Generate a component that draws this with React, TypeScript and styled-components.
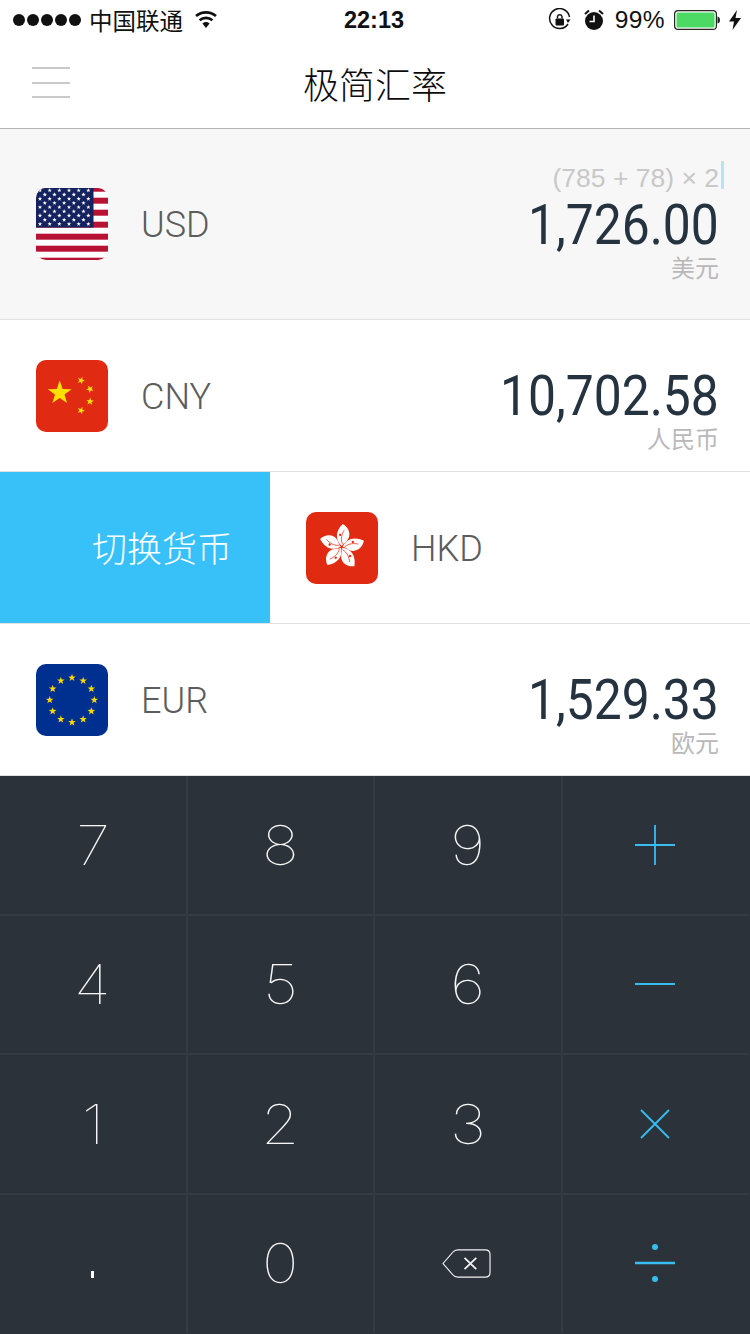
import React from 'react';
import styled, { createGlobalStyle } from 'styled-components';

const GlobalStyle = createGlobalStyle`
    html, body {
        margin: 0;
        padding: 0;
        background: #fff;
    }
    * {
        box-sizing: border-box;
    }
`;

const cjk = `"Liberation Sans", "Noto Sans CJK SC", sans-serif`;
const din = `"Roboto", "Noto Sans CJK SC", sans-serif`;

const Page = styled.div`
    width: 750px;
    height: 1334px;
    display: flex;
    flex-direction: column;
    overflow: hidden;
    font-family: ${cjk};
`;

// status bar
const StatusBar = styled.div`
    height: 40px;
    display: grid;
    grid-template-columns: 1fr auto 1fr;
    align-items: center;
    font-size: 24px;
    color: #111;
`;
const StatusLeft = styled.div`
    display: flex;
    align-items: center;
    padding-left: 13px;
    font-size: 23.5px;
`;
const Signal = styled.div`
    display: flex;
    gap: 2px;
    margin-right: 8px;
`;
const SignalDot = styled.span`
    width: 12px;
    height: 12px;
    border-radius: 50%;
    background: #111;
`;
const Wifi = styled.svg`
    margin-left: 11px;
    margin-top: -2px;
`;
const Clock = styled.div`
    font-weight: 700;
    font-size: 23.5px;
    margin-left: -2px;
`;
const StatusRight = styled.div`
    display: flex;
    align-items: center;
    justify-content: flex-end;
    padding-right: 9px;
`;
const Percent = styled.span`
    margin: 0 9px 0 11px;
    letter-spacing: 0.4px;
    font-size: 24.5px;
`;
const Alarm = styled.svg`
    margin-left: 12px;
`;
const Bolt = styled.svg`
    margin-left: 9px;
`;

// nav
const Nav = styled.div`
    height: 89px;
    border-bottom: 1px solid #b4b4b4;
    display: flex;
    align-items: center;
    justify-content: center;
    position: relative;
`;
const Menu = styled.div`
    position: absolute;
    left: 32px;
    top: 27px;
    width: 38px;
    height: 31px;
    display: flex;
    flex-direction: column;
    justify-content: space-between;
`;
const MenuLine = styled.span`
    height: 2px;
    background: #c9c9c9;
`;
const Title = styled.div`
    font-size: 36px;
    font-weight: 300;
    color: #0c0c0c;
    margin-top: -3px;
`;

// rows
const Row = styled.div<{ $active?: boolean }>`
    height: ${(p) => (p.$active ? 191 : 152)}px;
    display: flex;
    align-items: center;
    background: ${(p) => (p.$active ? '#f7f7f7' : '#fff')};
    border-bottom: 1px solid #e2e2e2;
`;
const SwipeAction = styled.div`
    width: 270px;
    height: 100%;
    background: #38c1f9;
    color: #fff;
    font-size: 35px;
    font-weight: 300;
    display: flex;
    align-items: center;
    justify-content: flex-end;
    padding-right: 38px;
    padding-bottom: 3px;
`;
const Flag = styled.svg`
    width: 72px;
    height: 72px;
    border-radius: 10px;
    margin-left: 36px;
    flex-shrink: 0;
`;
const Code = styled.div`
    font-family: ${din};
    font-size: 36px;
    font-weight: 300;
    color: #5c5c5c;
    margin-left: 33px;
    margin-top: 2px;
`;
const Money = styled.div`
    margin-left: auto;
    height: 100%;
    padding-right: 31px;
    display: grid;
    grid-template-rows: 1fr auto 1fr;
    justify-items: end;
`;
const Expression = styled.div`
    align-self: end;
    font-size: 26.5px;
    line-height: 34px;
    color: #c8c8c8;
    margin-right: -5px;
    margin-bottom: -1px;
    display: flex;
`;
const Cursor = styled.span`
    width: 3px;
    height: 28px;
    margin-left: 2px;
    background: #b5e3f7;
`;
const Amount = styled.div`
    grid-row: 2;
    font-family: ${din};
    font-size: 55px;
    line-height: 60px;
    padding-top: 1px;
    color: #24333f;
    transform: scaleX(0.905);
    transform-origin: right center;
`;
const Unit = styled.div`
    grid-row: 3;
    font-size: 24px;
    line-height: 28px;
    color: #b9b9b9;
`;

// keypad
const Keypad = styled.div`
    flex: 1;
    background: #2c3239;
    display: grid;
    grid-template-columns: repeat(4, 1fr);
    grid-template-rows: repeat(4, 1fr);
`;
const Key = styled.div<{ $last?: boolean; $bottom?: boolean }>`
    display: flex;
    align-items: center;
    justify-content: center;
    border-right: 2px solid ${(p) => (p.$last ? 'transparent' : '#363a43')};
    border-bottom: 2px solid ${(p) => (p.$bottom ? 'transparent' : '#363a43')};
    color: #f6f6f6;
    font-family: "Inter", sans-serif;
    font-weight: 100;
    font-size: 55px;
`;
const Digit = styled.span`
    display: inline-block;
    transform: scaleX(1.12);
`;
const DotMark = styled.span`
    width: 3px;
    height: 7px;
    background: #fff;
    margin-top: 22px;
`;
const DelIcon = styled.svg`
    margin-right: 2px;
`;

const star = (cx: number, cy: number, r: number, rot = 0) => {
    const pts: string[] = [];
    for (let i = 0; i < 10; i++) {
        const rad = i % 2 === 0 ? r : r * 0.4;
        const a = ((-90 + rot + i * 36) * Math.PI) / 180;
        pts.push(`${(cx + rad * Math.cos(a)).toFixed(2)},${(cy + rad * Math.sin(a)).toFixed(2)}`);
    }
    return pts.join(' ');
};

const UsFlag = () => {
    const stars: React.ReactElement[] = [];
    for (let r = 0; r < 9; r++) {
        const n = r % 2 === 0 ? 6 : 5;
        for (let c = 0; c < n; c++) {
            const x = (r % 2 === 0 ? 4 : 8.8) + c * 9.67;
            stars.push(<polygon key={`${r}-${c}`} points={star(x, 2.4 + r * 4.2, 2.3)} fill="#fff" />);
        }
    }
    return (
        <Flag viewBox="0 0 72 72">
            <rect width="72" height="72" fill="#fff" />
            {[0, 1, 2, 3, 4, 5, 6].map((i) => (
                <rect key={i} x="0" y={-2.3 + i * 12} width="72" height="6" fill="#b71234" />
            ))}
            <rect width="57.5" height="39.5" fill="#14235f" />
            {stars}
        </Flag>
    );
};

const CnFlag = () => (
    <Flag viewBox="0 0 72 72">
        <rect width="72" height="72" fill="#e02a12" />
        <polygon points={star(23.7, 33, 12.5)} fill="#ffe000" />
        <polygon points={star(45, 20.5, 4, 20)} fill="#ffe000" />
        <polygon points={star(54, 29, 4, 45)} fill="#ffe000" />
        <polygon points={star(54, 41.5, 4, 5)} fill="#ffe000" />
        <polygon points={star(45, 50.5, 4, 20)} fill="#ffe000" />
    </Flag>
);

const HkFlag = () => (
    <Flag viewBox="0 0 72 72">
        <rect width="72" height="72" fill="#e02a12" />
        <g transform="translate(35.7 35)">
            {[0, 72, 144, 216, 288].map((a) => (
                <g key={a} transform={`rotate(${a + 5})`}>
                    <path d="M0 -1 C-7 -6 -8 -15 -1 -23 C6 -20 9 -12 4.5 -6.5 C3 -4.5 1 -3.5 0 -1Z" fill="#fff" />
                    <path d="M0.5 -3 C-2 -8 -1 -13 1 -17" fill="none" stroke="#e02a12" strokeWidth="0.7" />
                    <circle cx="-2.5" cy="-12" r="1.2" fill="#e02a12" />
                </g>
            ))}
        </g>
    </Flag>
);

const EuFlag = () => (
    <Flag viewBox="0 0 72 72">
        <rect width="72" height="72" fill="#00308f" />
        {Array.from({ length: 12 }).map((_, i) => {
            const a = (i * 30 * Math.PI) / 180;
            return <polygon key={i} points={star(36 + 22.3 * Math.sin(a), 36 - 22.3 * Math.cos(a), 4)} fill="#ffd800" />;
        })}
    </Flag>
);

const OpIcon = ({ children }: { children: React.ReactNode }) => (
    <svg width="44" height="44" viewBox="0 0 44 44" fill="none" stroke="#38bdf0" strokeWidth="1.8">
        {children}
    </svg>
);

const digits = ['7', '8', '9', '+', '4', '5', '6', '-', '1', '2', '3', 'x', '.', '0', 'del', '/'];

const keyContent = (k: string) => {
    switch (k) {
        case '+':
            return <OpIcon><path d="M2 22H42M22 2V42" /></OpIcon>;
        case '-':
            return <OpIcon><path d="M2 22H42" /></OpIcon>;
        case 'x':
            return <OpIcon><path d="M8 8L36 36M36 8L8 36" /></OpIcon>;
        case '/':
            return (
                <OpIcon>
                    <path d="M2 22H42" strokeWidth="2.4" />
                    <circle cx="22" cy="6" r="3" fill="#38bdf0" stroke="none" />
                    <circle cx="22" cy="38" r="3" fill="#38bdf0" stroke="none" />
                </OpIcon>
            );
        case 'del':
            return (
                <DelIcon width="49" height="29" viewBox="0 0 50 31" fill="none" stroke="#f2f2f2" strokeWidth="1.2" preserveAspectRatio="none">
                    <path d="M1 15.5L11 3.5C12.5 1.5 14 1 16 1H44C47 1 49 3 49 6V25C49 28 47 30 44 30H16C14 30 12.5 29.5 11 27.5Z" />
                    <path d="M23 9.5L35 21.5M35 9.5L23 21.5" strokeWidth="1.8" />
                </DelIcon>
            );
        case '.':
            return <DotMark role="img" aria-label="." />;
        default:
            return <Digit>{k}</Digit>;
    }
};

const App = () => {
    return (
        <Page>
            <GlobalStyle />
            <StatusBar>
                <StatusLeft>
                    <Signal>
                        {[0, 1, 2, 3, 4].map((i) => <SignalDot key={i} />)}
                    </Signal>
                    中国联通
                    <Wifi width="24" height="18" viewBox="0 0 24 18">
                        <path d="M12 18L8.4 13.4A6 6 0 0 1 15.6 13.4Z" fill="#111" />
                        <path d="M5.6 10.2A10 10 0 0 1 18.4 10.2" fill="none" stroke="#111" strokeWidth="2.6" />
                        <path d="M2 6A15.5 15.5 0 0 1 22 6" fill="none" stroke="#111" strokeWidth="2.6" />
                    </Wifi>
                </StatusLeft>
                <Clock>22:13</Clock>
                <StatusRight>
                    <svg width="24" height="24" viewBox="0 0 24 24" fill="none">
                        <path d="M20 16A10 10 0 1 1 21.5 9" stroke="#111" strokeWidth="1.5" />
                        <path d="M18 11.5L22.5 11.5L20 15Z" fill="#111" />
                        <rect x="7.5" y="10.5" width="8.5" height="7" rx="1" fill="#111" />
                        <path d="M9.5 10.5V8.5A2.3 2.3 0 0 1 14 8.5V10.5" stroke="#111" strokeWidth="1.4" />
                    </svg>
                    <Alarm width="20" height="22" viewBox="0 0 20 22">
                        <circle cx="10" cy="12" r="9" fill="#111" />
                        <path d="M10 6.5V12.5H5.5" stroke="#fff" strokeWidth="1.6" fill="none" />
                        <path d="M1 5L5 1.5M19 5L15 1.5" stroke="#111" strokeWidth="2" />
                    </Alarm>
                    <Percent>99%</Percent>
                    <svg width="46" height="20" viewBox="0 0 46 20">
                        <rect x="0.6" y="0.6" width="41.8" height="18.8" rx="3.5" fill="none" stroke="#222" strokeWidth="1.2" />
                        <rect x="2.5" y="2.5" width="38" height="15" rx="1.5" fill="#4cd964" />
                        <path d="M43.5 6.5C45.5 7 46 8.5 46 10C46 11.5 45.5 13 43.5 13.5Z" fill="#222" />
                    </svg>
                    <Bolt width="12" height="20" viewBox="0 0 12 20">
                        <path d="M8 0L0 11.5H5L3.5 20L12 8H6.5Z" fill="#111" />
                    </Bolt>
                </StatusRight>
            </StatusBar>

            <Nav>
                <Menu>
                    <MenuLine />
                    <MenuLine />
                    <MenuLine />
                </Menu>
                <Title>极简汇率</Title>
            </Nav>

            <Row $active>
                <UsFlag />
                <Code>USD</Code>
                <Money>
                    <Expression>(785 + 78) × 2<Cursor /></Expression>
                    <Amount>1,726.00</Amount>
                    <Unit>美元</Unit>
                </Money>
            </Row>
            <Row>
                <CnFlag />
                <Code>CNY</Code>
                <Money>
                    <Amount>10,702.58</Amount>
                    <Unit>人民币</Unit>
                </Money>
            </Row>
            <Row>
                <SwipeAction>切换货币</SwipeAction>
                <HkFlag />
                <Code>HKD</Code>
            </Row>
            <Row>
                <EuFlag />
                <Code>EUR</Code>
                <Money>
                    <Amount>1,529.33</Amount>
                    <Unit>欧元</Unit>
                </Money>
            </Row>

            <Keypad>
                {digits.map((k, i) => (
                    <Key key={k} $last={i % 4 === 3} $bottom={i >= 12}>
                        {keyContent(k)}
                    </Key>
                ))}
            </Keypad>
        </Page>
    );
};

export default App;
